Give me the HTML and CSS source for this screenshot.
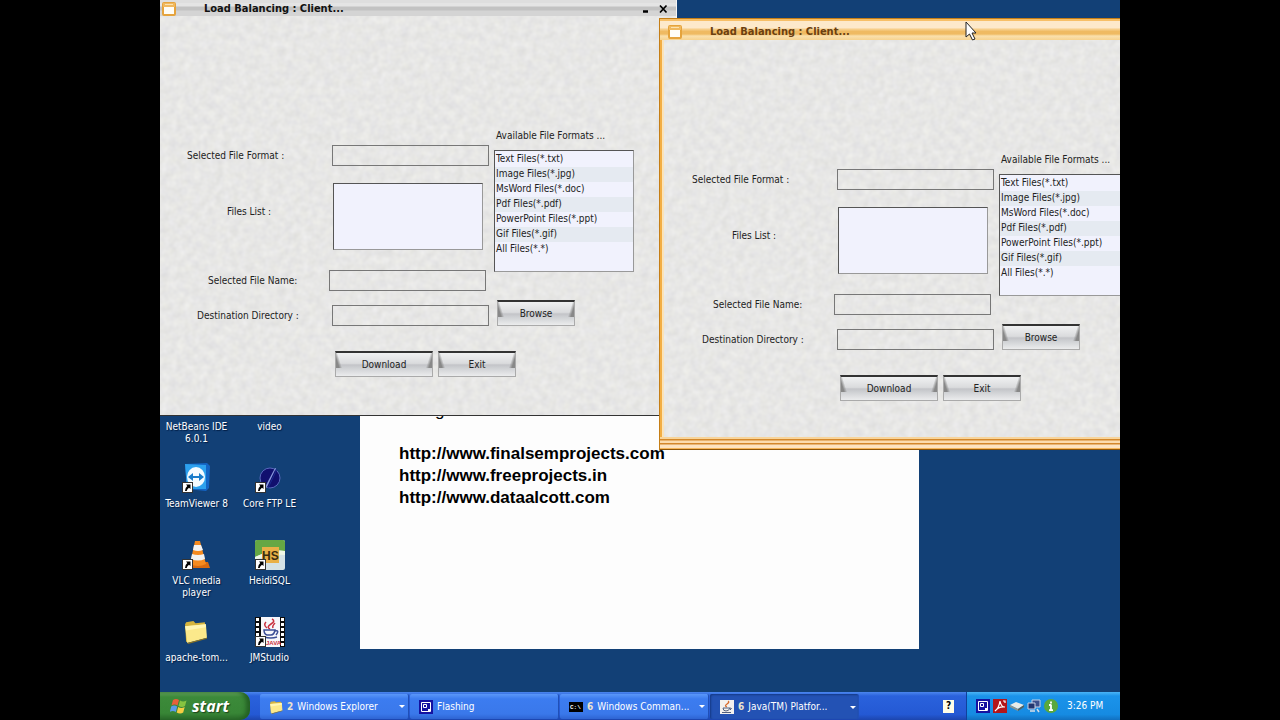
FILE: index.html
```html
<!DOCTYPE html>
<html lang="en">
<head>
<meta charset="utf-8">
<title>Load Balancing : Client...</title>
<link rel="stylesheet" href="styles.css">
</head>
<body>
<svg class="defs" aria-hidden="true">
  <defs>
    <symbol id="shortcut" viewBox="0 0 11 11"><rect x=".5" y=".5" width="10" height="10" fill="#fff" stroke="#333"/><path d="M4 2.500h4.500v4.500L7 5.800Q5 7 4.700 9L3 9Q2.800 6 5.300 4z" fill="#000"/></symbol>
    <symbol id="folder" viewBox="0 0 24 24"><path d="M2 5 3 3l7-1 2 2 9-1 1 14L3 22z" fill="#d5b43e"/><path d="M2 7 22 5l1 13L4 23z" fill="#fbe98b"/><path d="M2 7 22 5v3L3 11z" fill="#fff6b4"/><path d="M4 23l19-5v1L5 24z" fill="#8a7324"/></symbol>
    <symbol id="netapp" viewBox="0 0 14 14"><path d="M0 0h14v14H0z" fill="#1512a0"/><path d="M2.500 2.500h9v9h-9z" fill="none" stroke="#fff"/><path d="M4.500 4.500h3v3h-3z" fill="none" stroke="#fff"/><path d="M9 9h2v2H9z" fill="#fff"/></symbol>
    <symbol id="win" viewBox="0 0 14 14"><rect x="1" y="1" width="12" height="12" rx="1" fill="#fffdf6" stroke="#e5a33c" stroke-width="2"/><path d="M1 1h12v4H1z" fill="#f0b85e"/><path d="M3 2.500h8" stroke="#fbe2b0"/></symbol>
  </defs>
</svg>
<div class="screen">
  <main class="desktop">
    <div class="icons">
      <div class="shortcut"><span class="glyph"></span><span>NetBeans IDE 6.0.1</span></div>
      <div class="shortcut"><span class="glyph"></span><span>video</span></div>
      <div class="shortcut">
        <svg class="glyph" viewBox="0 0 32 32"><path d="M4 1 26 0l3 3-1 22-3 3L6 26z" fill="#1464c4"/><path d="M4 1 25 2v24L6 26z" fill="#2da1ee"/><ellipse cx="15" cy="14" rx="9" ry="10" fill="#f4fbff"/><path d="M7 14l5-4v3h6v-3l5 4-5 4v-3h-6v3z" fill="#187ccb"/><use href="#shortcut" x="1" y="19" width="11" height="11"/></svg>
        <span>TeamViewer 8</span></div>
      <div class="shortcut">
        <svg class="glyph" viewBox="0 0 32 32"><circle cx="16" cy="15" r="10" fill="#11106e" stroke="#5968bd"/><path d="M22 5 13 24l-3 2L21 5z" fill="#8b9be0"/><path d="M23 6 14 25" stroke="#1a2a8c"/><use href="#shortcut" x="1" y="19" width="11" height="11"/></svg>
        <span>Core FTP LE</span></div>
      <div class="shortcut">
        <svg class="glyph" viewBox="0 0 32 32"><path d="M6 22h21l2 6H5z" fill="#d86a10"/><path d="M14 1h5l6 23q-8 4-16 0z" fill="#f58a1f"/><path d="M13 5h7l2 5q-5 2-10 0zM11 14q6 2 12 0l1 5q-7 3-14 0z" fill="#f2f2f2"/><use href="#shortcut" x="1" y="19" width="11" height="11"/></svg>
        <span>VLC media player</span></div>
      <div class="shortcut">
        <svg class="glyph" viewBox="0 0 32 32"><rect x="1" y="0" width="30" height="30" rx="2" fill="#d5e2e6"/><path d="M1 2q0-2 2-2h26q2 0 2 2v9Q18 9 1 17z" fill="#65a744"/><path d="M1 17Q18 9 31 11v4Q15 14 1 20z" fill="#eff7e6"/><rect x="8" y="7" width="17" height="16" fill="#e9b047"/><text x="8" y="20" class="hs">HS</text><use href="#shortcut" x="1" y="19" width="11" height="11"/></svg>
        <span>HeidiSQL</span></div>
      <div class="shortcut">
        <svg class="glyph" viewBox="0 0 32 32"><use href="#folder" x="2" y="2" width="25" height="25"/></svg>
        <span>apache-tom...</span></div>
      <div class="shortcut">
        <svg class="glyph" viewBox="0 0 32 32"><path d="M1 0h30v30H1z" fill="#0b0b0b"/><path d="M7 0h19v30H7z" fill="#f7f7fb"/><path d="M3.500 1v28M28.500 1v28" stroke="#fff" stroke-width="3" stroke-dasharray="3 2"/><path d="M18 2q4 2-1 5t-1 5M12 5q-3 3 1 6M21 6q-3 3-2 5" fill="none" stroke="#c8303e" stroke-width="1.500"/><path d="M10 13h11q-1 5-4 5h-4q-3-1-3-5zM21 14q5-1 1 4M10 20q7 2 13 0" fill="none" stroke="#3d4f96" stroke-width="1.500"/><text x="12" y="28" class="java">JAVA</text><use href="#shortcut" x="1" y="19" width="11" height="11"/></svg>
        <span>JMStudio</span></div>
    </div>

    <section class="sheet">
      <span class="heading">g</span>
      <a href="#">http://www.finalsemprojects.com</a>
      <a href="#">http://www.freeprojects.in</a>
      <a href="#">http://www.dataalcott.com</a>
    </section>

    <section class="window inactive">
      <header class="titlebar">
        <svg class="winicon"><use href="#win"/></svg>
        <h1>Load Balancing : Client...</h1>
        <button class="ctl" type="button" aria-label="Minimize"><svg viewBox="0 0 10 10"><path d="M3 7.500h5" stroke="#000" stroke-width="2.500"/></svg></button>
        <button class="ctl" type="button" aria-label="Close"><svg viewBox="0 0 10 10"><path d="M2 1.500l6.500 7M8.500 1.500l-6.500 7" stroke="#000" stroke-width="1.700"/></svg></button>
      </header>
      <form class="client">
        <div class="panes">
          <div class="fields">
            <div class="row"><label class="in-1" for="a1">Selected File Format :</label><input id="a1" type="text"></div>
            <div class="row tall"><label class="in-4" for="a2">Files List :</label><select id="a2" size="4"></select></div>
            <div class="row name"><label class="in-3" for="a3">Selected File Name:</label><input id="a3" type="text"></div>
            <div class="row"><label class="in-2" for="a4">Destination Directory :</label><input id="a4" type="text"></div>
          </div>
          <div class="formats">
            <label for="a5">Available File Formats ...</label>
            <select id="a5" size="8"><option>Text Files(*.txt)</option><option>Image Files(*.jpg)</option><option>MsWord Files(*.doc)</option><option>Pdf Files(*.pdf)</option><option>PowerPoint Files(*.ppt)</option><option>Gif Files(*.gif)</option><option>All Files(*.*)</option></select>
            <button class="push" type="button">Browse</button>
          </div>
        </div>
        <div class="actions"><button class="push wide" type="button">Download</button><button class="push" type="button">Exit</button></div>
      </form>
    </section>

    <section class="window active">
      <header class="titlebar">
        <svg class="winicon"><use href="#win"/></svg>
        <h1>Load Balancing : Client...</h1>
      </header>
      <form class="client">
        <div class="panes">
          <div class="fields">
            <div class="row"><label class="in-1" for="b1">Selected File Format :</label><input id="b1" type="text"></div>
            <div class="row tall"><label class="in-4" for="b2">Files List :</label><select id="b2" size="4"></select></div>
            <div class="row name"><label class="in-3" for="b3">Selected File Name:</label><input id="b3" type="text"></div>
            <div class="row"><label class="in-2" for="b4">Destination Directory :</label><input id="b4" type="text"></div>
          </div>
          <div class="formats">
            <label for="b5">Available File Formats ...</label>
            <select id="b5" size="8"><option>Text Files(*.txt)</option><option>Image Files(*.jpg)</option><option>MsWord Files(*.doc)</option><option>Pdf Files(*.pdf)</option><option>PowerPoint Files(*.ppt)</option><option>Gif Files(*.gif)</option><option>All Files(*.*)</option></select>
            <button class="push" type="button">Browse</button>
          </div>
        </div>
        <div class="actions"><button class="push wide" type="button">Download</button><button class="push" type="button">Exit</button></div>
      </form>
      <div class="sill"></div>
    </section>

    <svg class="pointer" viewBox="0 0 12 20"><path d="M1 1v15l3.500-3 3 6 2.500-1-3-6H11z" fill="#fff" stroke="#222"/></svg>
  </main>

  <footer class="taskbar">
    <button class="start" type="button">
      <svg viewBox="0 0 18 16"><path d="M3 2q3-2 6 0L7.500 7.500q-3-2-6 0z" fill="#e8603a"/><path d="M10 2.500q3 2 6.500 0L15 8q-3 2-6.500 0z" fill="#86c440"/><path d="M1.200 8.500q3-2 6 0L5.800 14q-3-2-6 0z" fill="#5b9be8"/><path d="M8.200 9q3 2 6.500 0l-1.500 5.500q-3 2-6.500 0z" fill="#f6cd42"/></svg>
      start</button>
    <nav class="tasks">
      <button class="task" type="button"><svg><use href="#folder"/></svg><b>2</b><span>Windows Explorer</span><i></i></button>
      <button class="task" type="button"><svg><use href="#netapp"/></svg><span>Flashing</span></button>
      <button class="task" type="button"><svg viewBox="0 0 14 14"><path d="M0 2h14v10H0z" fill="#000"/><text x="1" y="9" class="cmd">C:\</text></svg><b>6</b><span>Windows Comman...</span><i></i></button>
      <button class="task pressed" type="button"><svg viewBox="0 0 14 14"><path d="M0 0h14v14H0z" fill="#f3f1ee"/><path d="M8 1q2 1-1 3t0 3" fill="none" stroke="#d86a2a" stroke-width="1.300"/><path d="M3 8h7q-1 3-4 3t-3-3zM10 8q3 0 0 2M2 12.500h9" fill="none" stroke="#51607e"/></svg><b>6</b><span>Java(TM) Platfor...</span><i></i></button>
    </nav>
    <span class="help">?</span>
    <div class="tray">
      <svg><use href="#netapp"/></svg>
      <svg viewBox="0 0 14 14"><path d="M0 0h14v14H0z" fill="#b3151a"/><path d="M2 12q4-3 5-10 1 6 5 6-6-1-10 4zM10 2h2v2" fill="none" stroke="#fff" stroke-width="1.200"/></svg>
      <svg viewBox="0 0 14 14"><path d="M0 6l6-3 8 3-6 4z" fill="#e8ebe8"/><path d="M0 6l8 4v2L0 8z" fill="#8b948f"/><path d="M8 10l6-4v2l-6 4z" fill="#56605c"/></svg>
      <svg viewBox="0 0 14 14"><path d="M5 1h8v7H5z" fill="#3b4f8c" stroke="#c9d2e6"/><path d="M1 4h7v6H1z" fill="#22356f" stroke="#c9d2e6"/><path d="M3 12h5M10 10l2 3" stroke="#d9dde6" stroke-width="1.500"/></svg>
      <svg viewBox="0 0 14 14"><circle cx="7" cy="7" r="7" fill="#5aa83c"/><path d="M7 2.500v2M7 5.500v6M5 6h2M5 11.200h4" stroke="#fff" stroke-width="1.800"/></svg>
      <time>3:26 PM</time>
    </div>
  </footer>
</div>
</body>
</html>
```
FILE: styles.css
```css
* { box-sizing: border-box; }
body { margin: 0; background: #000; font: 10px/12px "DejaVu Sans Condensed", "DejaVu Sans", sans-serif; color: #222; }
button, input, select { font: inherit; color: inherit; margin: 0; padding: 0; border-radius: 0; }
.defs { position: absolute; width: 0; height: 0; }

.screen { width: 75%; height: 100vh; margin: 0 auto; display: flex; flex-direction: column; overflow: hidden; }
.desktop { position: relative; flex: 1; min-height: 0; overflow: hidden; background: #124076; }

.icons { display: grid; grid-template-columns: 73px 73px; grid-auto-rows: 77px; padding-top: 386px; }
.shortcut { display: flex; flex-direction: column; align-items: center; gap: 3px; color: #fff; text-align: center; text-shadow: 1px 1px 1px #001c44; }
.shortcut .glyph { width: 32px; height: 32px; flex: none; }
.hs { font: bold 12px "Liberation Sans", sans-serif; fill: #3a2c10; text-shadow: none; }
.java { font: bold 6px "Liberation Sans", sans-serif; fill: #c8303e; text-shadow: none; }

.sheet { position: absolute; left: 200px; top: 120px; width: 559px; height: 529px; padding: 280px 0 0 39px; display: flex; flex-direction: column; align-items: flex-start; background: #fdfdfd; font: bold 17px/22px "Liberation Sans", Arial, sans-serif; color: #000; }
.sheet a { color: #000; text-decoration: none; }
.heading { height: 22px; margin: 0 0 21px 36px; font-weight: normal; }

.window { position: absolute; display: flex; flex-direction: column; background-color: #e7e7e5; background-image: url("data:image/svg+xml,%3Csvg xmlns='http://www.w3.org/2000/svg' width='240' height='240'%3E%3Cfilter id='n' x='0' y='0' width='1' height='1' color-interpolation-filters='sRGB'%3E%3CfeTurbulence type='fractalNoise' baseFrequency='.13' numOctaves='2' stitchTiles='stitch'/%3E%3CfeColorMatrix values='.08 0 0 0 .866 .08 0 0 0 .865 .07 0 .03 0 .85 0 0 0 0 1'/%3E%3C/filter%3E%3Crect width='240' height='240' filter='url(%23n)'/%3E%3C/svg%3E"); }
.inactive { left: -6px; top: -6px; width: 523px; padding: 0 6px; border-bottom: 1px solid #333; border-right: 1px solid #f5f5f5; }
.active { left: 499px; top: 18px; width: 523px; border: 1px solid #c57e16; border-width: 1px 1px 0; box-shadow: inset 2px 0 #f2ae45, inset 4px 0 #fbe3b8; padding-left: 5px; }
.titlebar { display: flex; align-items: center; height: 22px; }
.inactive .titlebar { padding: 7px 8px 0; margin: 0 -6px; background: linear-gradient(#dedede 0 9px, #e4e4e4 9px 12px, #c2c2c2 13px 16px, #d4d4d4 17px 100%); }
.active .titlebar { height: 21px; margin-left: -5px; padding: 4px 0 0 8px; background: linear-gradient(#f7bf67 0 2px, #fde9cb 2px 9px, #f6cd88 10px 11px, #efba62 12px 15px, #fae0ad 17px, #f6d28f 100%); }
.winicon { width: 14px; height: 14px; flex: none; }
.titlebar h1 { flex: 1; margin: 0 0 0 28px; font: bold 11px/14px "DejaVu Sans Condensed", "DejaVu Sans", sans-serif; color: #111; }
.active h1 { color: #6b4010; }
.ctl { width: 10px; height: 10px; margin-left: 8px; border: 0; background: none; display: flex; }
.ctl svg { width: 10px; height: 10px; }

.client { padding: 114px 0 38px; }
.active .client { padding-bottom: 36px; }
.panes { display: flex; height: 197px; }
.fields { width: 334px; padding-top: 15px; }
.row { display: flex; align-items: center; height: 21px; margin-bottom: 14px; }
.row label { width: 172px; }
.row input { width: 157px; height: 21px; border: 1px solid #777; background: transparent; }
.row.tall { height: 67px; margin: 17px 0 20px; }
.row.tall label { padding-bottom: 10px; }
.row.tall select { width: 150px; height: 67px; margin-left: 1px; }
.row.name label { width: 169px; }
.row .in-1 { padding-left: 27px; }
.row .in-2 { padding-left: 37px; }
.row .in-3 { padding-left: 48px; }
.row .in-4 { padding-left: 67px; }
select { appearance: none; border: 1px solid #555; border-right-color: #999; border-bottom-color: #999; background: #f1f2fd; overflow: hidden; outline: 0; }
option { height: 15px; min-height: 15px; padding: 1px 0 0 1px; line-height: 15px; }
option:nth-child(even) { background: #e5eaf1; }
.formats { display: flex; flex-direction: column; align-items: flex-start; }
.formats label { padding-left: 2px; height: 20px; }
.formats select { width: 140px; height: 122px; padding-top: 1px; }
.push { width: 78px; height: 26px; border: 1px solid #aaa; border-top: 2px solid #333; text-align: center; background: linear-gradient(72deg, #888 0 3px, transparent 6px) 0 0 / 8px 15px no-repeat, linear-gradient(-72deg, #888 0 3px, transparent 6px) 100% 0 / 8px 15px no-repeat, linear-gradient(#f0f1f2, #dadbdd 45%, #c3c4c8 52%, #ced0d3 65%, #ebeced); }
.formats .push { margin: 28px 0 0 3px; }
.push.wide { width: 98px; }
.actions { display: flex; gap: 5px; padding: 24px 0 0 175px; }
.sill { height: 13px; margin-left: -5px; background: linear-gradient(#f8d49a 0 2px, #d3872a 2px 3px, #fbdcae 4px 6px, #d3872a 6px 7px, #fce3c0 8px 11px, #f5b65a 11px 12px, #8e5508 12px); }
.pointer { position: absolute; left: 805px; top: 21px; width: 12px; height: 20px; }

.taskbar { position: relative; display: flex; align-items: stretch; height: 28px; flex: none; background: linear-gradient(#4b86ee, #2a62dc 4px, #2459d4 80%, #1c45ae); color: #fff; }
.start { display: flex; align-items: center; gap: 4px; width: 90px; padding-left: 10px; border: 0; border-radius: 0 10px 10px 0; background: linear-gradient(#6aa862, #3c8a3a 5px, #388636 75%, #2a6a2a); box-shadow: inset -4px 0 4px #246024; color: #fff; font: italic bold 16px/20px "Open Sans", "Noto Sans", sans-serif; text-shadow: 1px 1px 1px #1c441c; }
.start svg { width: 18px; height: 16px; }
.tasks { display: flex; gap: 1px; margin-left: 10px; flex: 1; }
.task { display: flex; align-items: center; gap: 4px; width: 149px; padding: 0 3px 0 9px; border: 0; border-right: 1px solid #2050b8; margin: 2px 0 1px; border-radius: 2px; background: linear-gradient(#5a97f8, #3c7cf0 5px, #3a78ea 80%, #2e64d2); white-space: nowrap; text-align: left; }
.task svg { width: 14px; height: 14px; flex: none; }
.task b { font-weight: bold; color: #eee3cc; }
.task span { flex: 1; }
.task i { border: 3px solid transparent; border-top-color: #fff; border-bottom: 0; }
.task.pressed { padding: 1px 2px 0 10px; background: #2352b4; box-shadow: inset 1px 1px 2px #153a86; }
.help { align-self: center; width: 11px; height: 13px; margin-right: 12px; background: #fffde8; color: #000; font-weight: bold; text-align: center; }
.tray { display: flex; align-items: center; gap: 3px; width: 154px; padding-left: 9px; border-left: 1px solid #10419c; background: linear-gradient(#4ab4f6, #1b93ea 4px, #168be2 80%, #1170c0); }
.tray svg { width: 14px; height: 14px; }
.tray time { margin-left: 6px; white-space: nowrap; }
.cmd { font: bold 6px "Liberation Mono", monospace; fill: #fff; }
```
